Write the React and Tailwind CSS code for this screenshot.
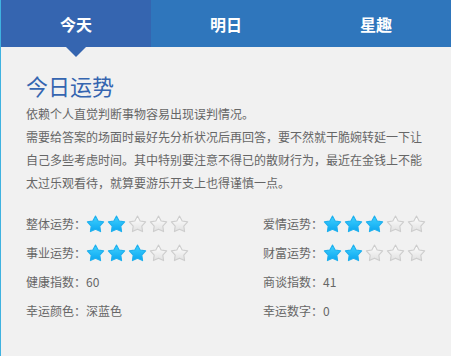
import React from 'react';

const Star = ({ filled, id }) => (
  <svg width="19" height="18" viewBox="0 0 24 23" className="block">
    <defs>
      <linearGradient id={`g-${id}`} x1="0" y1="0" x2="0" y2="1">
        {filled ? (
          <>
            <stop offset="0%" stopColor="#40d2ff" />
            <stop offset="100%" stopColor="#0ba6f0" />
          </>
        ) : (
          <>
            <stop offset="0%" stopColor="#ffffff" />
            <stop offset="100%" stopColor="#e0e0e0" />
          </>
        )}
      </linearGradient>
    </defs>
    <path
      d="M12 1.3 L15.4 7.6 L22.4 8.8 L17.5 14.1 L18.5 21.2 L12 18.1 L5.5 21.2 L6.5 14.1 L1.6 8.8 L8.6 7.6 Z"
      fill={`url(#g-${id})`}
      stroke={filled ? '#1fb0ee' : '#cdcdcd'}
      strokeWidth="1.4"
      strokeLinejoin="round"
    />
  </svg>
);

const Stars = ({ n, name }) => (
  <div className="flex gap-[2px]">
    {[0, 1, 2, 3, 4].map((i) => (
      <Star key={i} filled={i < n} id={`${name}-${i}`} />
    ))}
  </div>
);

const Row = ({ label, children }) => (
  <div className="flex h-[29px] items-center text-[12px] text-[#666]">
    <span>{label}：</span>
    {children}
  </div>
);

export default function App() {
  return (
    <div
      className="w-[451px] h-[356px] bg-[#f1f1f1] border-l border-[#3fb2e0] overflow-hidden"
      style={{ fontFamily: '"Microsoft YaHei", "Noto Sans CJK SC", sans-serif' }}
    >
      {/* tabs */}
      <div className="relative flex h-[47px] bg-[#2f76bc] text-white text-[16px] font-bold">
        <div className="relative flex w-[150px] items-center justify-center bg-[#3565b0]">
          今天
          <div className="absolute left-1/2 top-full -translate-x-1/2 w-0 h-0 border-l-[10px] border-r-[10px] border-t-[10px] border-l-transparent border-r-transparent border-t-[#3565b0]" />
        </div>
        <div className="flex flex-1 items-center justify-center">明日</div>
        <div className="flex flex-1 items-center justify-center">星趣</div>
      </div>

      <div className="pl-[25px] pt-[23px]">
        <h1 className="text-[22px] leading-[30px] text-[#3565b0] font-normal">今日运势</h1>
        <p className="mt-[2px] text-[12px] leading-[23px] text-[#666] whitespace-nowrap">
          依赖个人直觉判断事物容易出现误判情况。
          <br />
          需要给答案的场面时最好先分析状况后再回答，要不然就干脆婉转延一下让
          <br />
          自己多些考虑时间。其中特别要注意不得已的散财行为，最近在金钱上不能
          <br />
          太过乐观看待，就算要游乐开支上也得谨慎一点。
        </p>

        <div className="mt-[15px] grid grid-cols-[237px_1fr]">
          <Row label="整体运势"><Stars n={2} name="a" /></Row>
          <Row label="爱情运势"><Stars n={3} name="b" /></Row>
          <Row label="事业运势"><Stars n={3} name="c" /></Row>
          <Row label="财富运势"><Stars n={2} name="d" /></Row>
          <Row label="健康指数">60</Row>
          <Row label="商谈指数">41</Row>
          <Row label="幸运颜色">深蓝色</Row>
          <Row label="幸运数字">0</Row>
        </div>
      </div>
    </div>
  );
}
